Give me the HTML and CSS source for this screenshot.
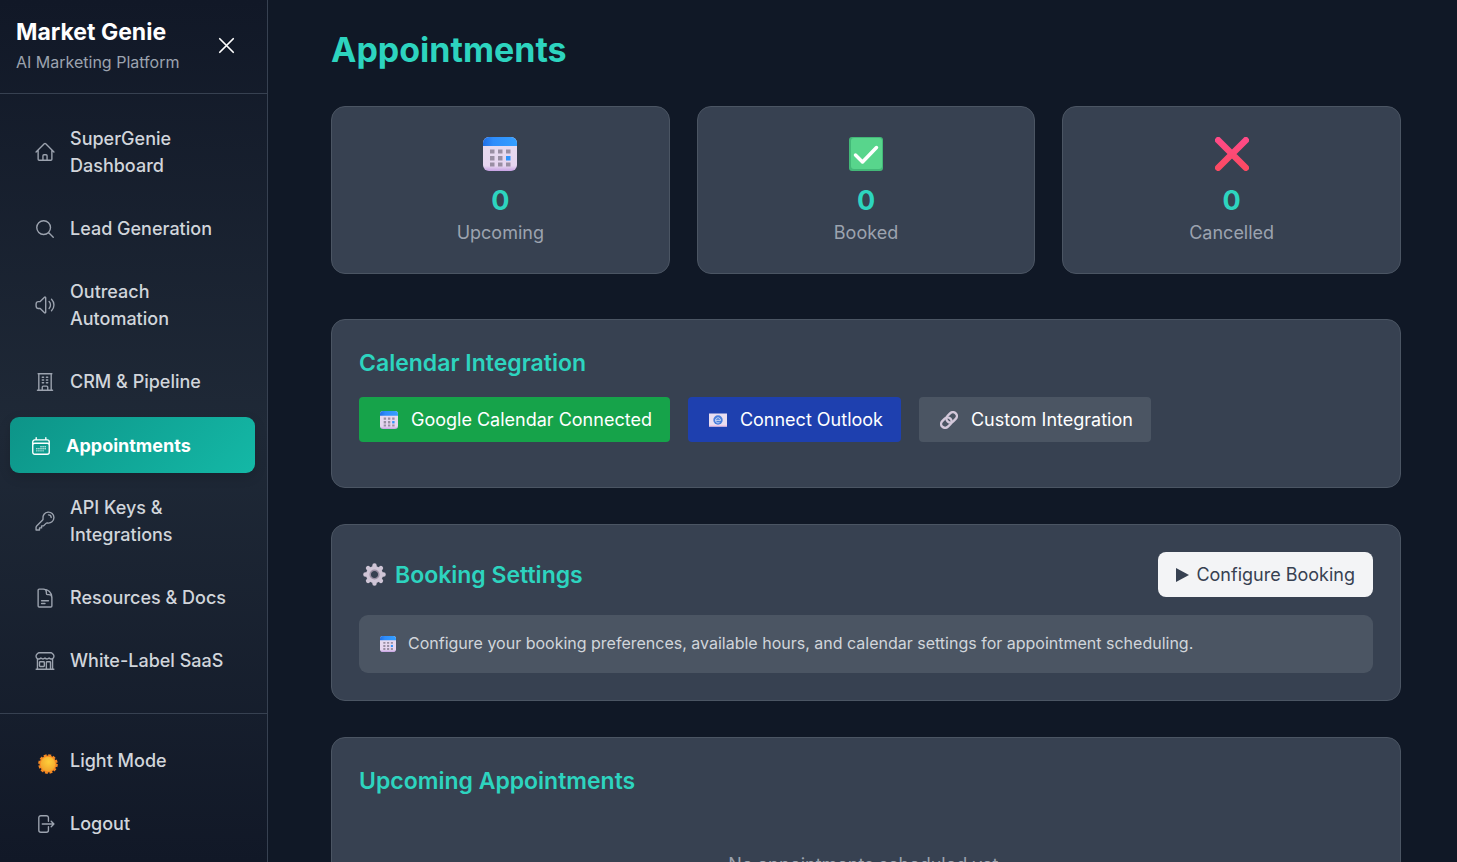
FILE: index.html
```html
<!DOCTYPE html>
<html lang="en">
<head>
	<title>Market Genie - Appointments</title>
	<meta charset="UTF-8">
	<meta name="viewport" content="width=device-width, initial-scale=1">
	<link rel="stylesheet" href="styles.css">
</head>
<body>

	<!-- Shared symbols -->
	<svg class="symbols" aria-hidden="true">
		<defs>
			<linearGradient id="calTop" x1="0" y1="0" x2="1" y2="0">
				<stop offset="0" stop-color="#1f6fe5"/>
				<stop offset=".3" stop-color="#2f8dfb"/>
				<stop offset="1" stop-color="#349fff"/>
			</linearGradient>
			<linearGradient id="calBody" x1="0" y1="0" x2="0" y2="1">
				<stop offset="0" stop-color="#e6dcee"/>
				<stop offset=".85" stop-color="#e6d5f0"/>
				<stop offset="1" stop-color="#c5a0e2"/>
			</linearGradient>
			<linearGradient id="crossFill" x1="0" y1="0" x2="0" y2="1">
				<stop offset="0" stop-color="#ff4a86"/>
				<stop offset="1" stop-color="#fb4a62"/>
			</linearGradient>
			<radialGradient id="sunFill" cx=".55" cy=".35" r=".65">
				<stop offset="0" stop-color="#ffcf3a"/>
				<stop offset="1" stop-color="#f2a52c"/>
			</radialGradient>
		</defs>
		<symbol id="calendar" viewBox="0 0 34 34">
			<rect width="34" height="34" rx="6" fill="url(#calBody)"/>
			<path d="M0 9V6a6 6 0 0 1 6-6h22a6 6 0 0 1 6 6v3Z" fill="url(#calTop)"/>
			<path d="M7 12.500h4.500v4H7Zm8 0h4.500v4H15Zm8 0h4.500v4H23ZM7 19h4.500v4.500H7Zm8 0h4.500v4.500H15ZM7 25.500h4.500v4H7Zm8 0h4.500v4H15Zm8 0h4.500v4H23Z" fill="#998ea3"/>
			<path d="M23 19h4.500v4.500H23Z" fill="#2f93fb"/>
		</symbol>
		<symbol id="check" viewBox="0 0 34 34">
			<rect width="34" height="34" rx="3" fill="#43b878"/>
			<rect x="2" y="1" width="31" height="31" rx="3" fill="#58d58c"/>
			<path d="m6.500 18 7 7L27.500 10.500" fill="none" stroke="#fff" stroke-width="3.500" stroke-linecap="round" stroke-linejoin="round"/>
		</symbol>
		<symbol id="cross" viewBox="0 0 34 34">
			<path d="M3.200 3.200 30.800 30.800M30.800 3.200 3.200 30.810" fill="none" stroke="url(#crossFill)" stroke-width="6.400" stroke-linecap="round"/>
		</symbol>
		<symbol id="mail" viewBox="0 0 18 18">
			<path d="M0 2.500h18v13H0Z" fill="#e9def0"/>
			<path d="M0 14h18v1.500H0Z" fill="#f0c9e6"/>
			<circle cx="9" cy="9" r="4.700" fill="#4a7fdc"/>
			<path d="M11.500 9.500a2.500 2.500 0 1 0-1 1.800M7 9.300h4.500" fill="none" stroke="#cfdcf6" stroke-width="1"/>
		</symbol>
		<symbol id="link" viewBox="0 0 18 18">
			<g fill="none" stroke="#d3c8da" stroke-width="2.400" transform="rotate(-45 9 9)">
				<rect x="-.5" y="5" width="11.500" height="8" rx="4"/>
				<rect x="7" y="5" width="11.500" height="8" rx="4"/>
			</g>
		</symbol>
		<symbol id="gear" viewBox="0 0 24 24">
			<path d="M12 4V2.500M12 20v1.500M4 12H2.500M20 12h1.500M6.300 6.300l-1-1M17.700 17.700l1 1M17.700 6.300l1-1M6.300 17.700l-1 1" stroke="#cfc5d6" stroke-width="4.600" stroke-linecap="round"/>
			<circle cx="12" cy="12" r="6.400" fill="none" stroke="#cfc5d6" stroke-width="5"/>
			<circle cx="12" cy="12" r="4.500" fill="none" stroke="#9a8fa3" stroke-width="1.600"/>
		</symbol>
		<symbol id="sun" viewBox="0 0 20 20">
			<circle cx="10" cy="10" r="8.500" fill="none" stroke="#f78a22" stroke-width="2.600" stroke-dasharray="2.850 1.600"/>
			<circle cx="10" cy="10" r="8.500" fill="#f78a22"/>
			<circle cx="10" cy="10" r="7.300" fill="url(#sunFill)"/>
		</symbol>
	</svg>

	<aside class="sidebar">
		<div class="brand">
			<div>
				<div class="brand-name">Market Genie</div>
				<div class="brand-tag">AI Marketing Platform</div>
			</div>
			<button class="close" type="button" aria-label="Close menu">
				<svg class="line-icon" viewBox="0 0 24 24"><path d="M6 18 18 6M6 6l12 12"/></svg>
			</button>
		</div>

		<nav class="menu">
			<a class="item" href="#dashboard">
				<svg class="line-icon" viewBox="0 0 24 24"><path d="m2.250 12 8.954-8.955c.44-.439 1.152-.439 1.591 0L21.750 12M4.500 9.750v10.125c0 .621.504 1.125 1.125 1.125H9.750v-4.875c0-.621.504-1.125 1.125-1.125h2.250c.621 0 1.125.504 1.125 1.125V21h4.125c.621 0 1.125-.504 1.125-1.125V9.750M8.250 21h8.250"/></svg>
				<span>SuperGenie Dashboard</span>
			</a>
			<a class="item" href="#leads">
				<svg class="line-icon" viewBox="0 0 24 24"><path d="m21 21-5.197-5.197m0 0A7.500 7.500 0 1 0 5.196 5.196a7.500 7.500 0 0 0 10.607 10.607Z"/></svg>
				<span>Lead Generation</span>
			</a>
			<a class="item" href="#outreach">
				<svg class="line-icon" viewBox="0 0 24 24"><path d="M19.114 5.636a9 9 0 0 1 0 12.728M16.463 8.288a5.250 5.250 0 0 1 0 7.424M6.750 8.250l4.720-4.720a.75.75 0 0 1 1.280.53v15.880a.75.75 0 0 1-1.280.53l-4.720-4.720H4.510c-.88 0-1.704-.507-1.938-1.354A9.009 9.009 0 0 1 2.250 12c0-.83.112-1.633.322-2.396C2.806 8.756 3.630 8.250 4.510 8.250H6.750Z"/></svg>
				<span>Outreach Automation</span>
			</a>
			<a class="item" href="#crm">
				<svg class="line-icon" viewBox="0 0 24 24"><path d="M3.750 21h16.500M4.500 3h15M5.250 3v18m13.500-18v18M9 6.750h1.500m-1.500 3h1.500m-1.500 3h1.500m3-6H15m-1.500 3H15m-1.500 3H15M9 21v-3.375c0-.621.504-1.125 1.125-1.125h3.750c.621 0 1.125.504 1.125 1.125V21"/></svg>
				<span>CRM &amp; Pipeline</span>
			</a>
			<a class="item active" href="#appointments" aria-current="page">
				<svg class="line-icon" viewBox="0 0 24 24"><path d="M6.750 3v2.250M17.250 3v2.250M3 18.750V7.500a2.250 2.250 0 0 1 2.250-2.250h13.500A2.250 2.250 0 0 1 21 7.500v11.250m-18 0A2.250 2.250 0 0 0 5.250 21h13.500A2.250 2.250 0 0 0 21 18.750m-18 0v-7.500A2.250 2.250 0 0 1 5.250 9h13.500A2.250 2.250 0 0 1 21 11.250v7.500m-9-6h.008v.008H12v-.008ZM12 15h.008v.008H12V15Zm0 2.250h.008v.008H12v-.008ZM9.750 15h.008v.008H9.750V15Zm0 2.250h.008v.008H9.750v-.008ZM7.500 15h.008v.008H7.500V15Zm0 2.250h.008v.008H7.500v-.008Zm6.750-4.500h.008v.008h-.008v-.008Zm0 2.250h.008v.008h-.008V15Zm0 2.250h.008v.008h-.008v-.008Zm2.250-4.500h.008v.008H16.500v-.008Zm0 2.250h.008v.008H16.500V15Z"/></svg>
				<span>Appointments</span>
			</a>
			<a class="item" href="#api">
				<svg class="line-icon" viewBox="0 0 24 24"><path d="M15.750 5.250a3 3 0 0 1 3 3m3 0a6 6 0 0 1-7.029 5.912c-.563-.097-1.159.026-1.563.43L10.500 17.250H8.250v2.250H6v2.250H2.250v-2.818c0-.597.237-1.170.659-1.591l6.499-6.499c.404-.404.527-1 .43-1.563A6 6 0 1 1 21.750 8.250Z"/></svg>
				<span>API Keys &amp; Integrations</span>
			</a>
			<a class="item" href="#docs">
				<svg class="line-icon" viewBox="0 0 24 24"><path d="M19.500 14.250v-2.625a3.375 3.375 0 0 0-3.375-3.375h-1.500A1.125 1.125 0 0 1 13.500 7.125v-1.500a3.375 3.375 0 0 0-3.375-3.375H8.250m0 12.750h7.500m-7.500 3H12M10.500 2.250H5.625c-.621 0-1.125.504-1.125 1.125v17.250c0 .621.504 1.125 1.125 1.125h12.750c.621 0 1.125-.504 1.125-1.125V11.250a9 9 0 0 0-9-9Z"/></svg>
				<span>Resources &amp; Docs</span>
			</a>
			<a class="item" href="#saas">
				<svg class="line-icon" viewBox="0 0 24 24"><path d="M13.500 21v-7.500a.75.75 0 0 1 .75-.75h3a.75.75 0 0 1 .75.75V21m-4.500 0H2.360m11.140 0H18m0 0h3.640m-1.390 0V9.349m-16.500 11.650V9.350m0 0a3.001 3.001 0 0 0 3.750-.615A2.993 2.993 0 0 0 9.750 9.750c.896 0 1.700-.393 2.250-1.016a2.993 2.993 0 0 0 2.250 1.016c.896 0 1.700-.393 2.250-1.016a3.001 3.001 0 0 0 3.750.614m-16.500 0a3.004 3.004 0 0 1-.621-4.720L4.318 3.440A1.500 1.500 0 0 1 5.378 3h13.243a1.500 1.500 0 0 1 1.060.44l1.190 1.189a3 3 0 0 1-.621 4.720m-13.500 8.650h3.750a.75.75 0 0 0 .75-.75V13.500a.75.75 0 0 0-.75-.75H6.750a.75.75 0 0 0-.75.75v3.750c0 .415.336.75.75.75Z"/></svg>
				<span>White-Label SaaS</span>
			</a>
		</nav>

		<div class="menu menu-bottom">
			<button class="item" type="button">
				<span class="sun-wrap"><svg class="sun"><use href="#sun"/></svg></span>
				<span>Light Mode</span>
			</button>
			<button class="item" type="button">
				<svg class="line-icon" viewBox="0 0 24 24"><path d="M15.750 9V5.250A2.250 2.250 0 0 0 13.500 3h-6a2.250 2.250 0 0 0-2.250 2.250v13.500A2.250 2.250 0 0 0 7.500 21h6a2.250 2.250 0 0 0 2.250-2.250V15m3 0 3-3m0 0-3-3m3 3H9"/></svg>
				<span>Logout</span>
			</button>
		</div>
	</aside>

	<main class="content">
		<h1>Appointments</h1>

		<div class="stats">
			<div class="card stat">
				<svg class="stat-icon"><use href="#calendar"/></svg>
				<div class="stat-number">0</div>
				<div class="stat-label">Upcoming</div>
			</div>
			<div class="card stat">
				<svg class="stat-icon"><use href="#check"/></svg>
				<div class="stat-number">0</div>
				<div class="stat-label">Booked</div>
			</div>
			<div class="card stat">
				<svg class="stat-icon"><use href="#cross"/></svg>
				<div class="stat-number">0</div>
				<div class="stat-label">Cancelled</div>
			</div>
		</div>

		<section class="card integrations">
			<h2>Calendar Integration</h2>
			<div class="buttons">
				<button class="btn btn-google" type="button"><svg class="btn-icon"><use href="#calendar"/></svg>Google Calendar Connected</button>
				<button class="btn btn-outlook" type="button"><svg class="btn-icon"><use href="#mail"/></svg>Connect Outlook</button>
				<button class="btn btn-custom" type="button"><svg class="btn-icon"><use href="#link"/></svg>Custom Integration</button>
			</div>
		</section>

		<section class="card">
			<div class="section-head">
				<h2 class="with-icon"><svg class="gear"><use href="#gear"/></svg>Booking Settings</h2>
				<button class="btn btn-light" type="button"><svg class="play" viewBox="0 0 13 14"><path d="M0 0v14l13-7Z"/></svg>Configure Booking</button>
			</div>
			<div class="note">
				<svg class="note-icon"><use href="#calendar"/></svg>
				<span>Configure your booking preferences, available hours, and calendar settings for appointment scheduling.</span>
			</div>
		</section>

		<section class="card">
			<h2>Upcoming Appointments</h2>
			<p class="empty">No appointments scheduled yet.</p>
		</section>
	</main>

</body>
</html>
```
FILE: styles.css
```css
* {
	box-sizing: border-box;
}
body {
	display: flex;
	height: 100vh;
	margin: 0;
	overflow: hidden;
	font-family: Inter, "Liberation Sans", sans-serif;
	font-size: 18px;
	line-height: 27px;
	color: #d1d5db;
	background: #101826;
}
button {
	font: inherit;
	border: 0;
	cursor: pointer;
}
svg {
	display: block;
	flex-shrink: 0;
}
h1, h2, p {
	margin: 0;
}
.symbols {
	position: absolute;
	width: 0;
	height: 0;
}
.line-icon {
	width: 22px;
	height: 22px;
	fill: none;
	stroke: currentColor;
	stroke-width: 1.5;
	stroke-linecap: round;
	stroke-linejoin: round;
}

/* Sidebar */
.sidebar {
	display: flex;
	flex-direction: column;
	flex-shrink: 0;
	width: 268px;
	border-right: 1px solid #374151;
	background: linear-gradient(#111827, #1f2937 50%, #111827);
	overflow: hidden;
}
.brand {
	display: flex;
	justify-content: space-between;
	align-items: center;
	padding: 16px 27px 17px 16px;
	border-bottom: 1px solid #374151;
}
.brand-name {
	font-size: 23px;
	font-weight: 700;
	line-height: 32px;
	color: #fff;
}
.brand-tag {
	font-size: 16px;
	line-height: 28px;
	color: #9ca3af;
}
.close {
	padding: 0 0 2px;
	color: #fff;
	background: none;
}
.close .line-icon {
	width: 27px;
	height: 27px;
}
.menu {
	display: flex;
	flex-direction: column;
	gap: 9px;
	padding: 18px 12px 25px;
}
.item {
	display: flex;
	align-items: center;
	gap: 14px;
	padding: 13px 22px 14px;
	border-radius: 9px;
	font-weight: 500;
	text-align: left;
	text-decoration: none;
	color: #d1d5db;
	background: none;
}
.item .line-icon {
	color: #9ca3af;
}
.item.active {
	margin: -1px 0 -1px -2px;
	padding: 15px 20px 14px;
	font-weight: 700;
	color: #fff;
	background: linear-gradient(135deg, #0d9488, #14b8a6);
	box-shadow: 0 4px 12px rgba(0, 0, 0, .15);
}
.item.active .line-icon {
	color: #fff;
}
.menu-bottom {
	padding-top: 19px;
	border-top: 1px solid #374151;
}
.sun-wrap {
	width: 22px;
	padding: 8px 0 0 4px;
}
.sun {
	width: 20px;
	height: 20px;
}

/* Content */
.content {
	flex: 1;
	min-width: 0;
	padding: 27px 56px 27px 63px;
	overflow: auto;
	scrollbar-width: none;
}
h1 {
	margin-bottom: 34px;
	font-size: 34px;
	font-weight: 700;
	line-height: 45px;
	color: #2dd4bf;
}
h2 {
	margin-bottom: 18px;
	font-size: 23px;
	font-weight: 600;
	line-height: 32px;
	color: #2dd4bf;
}
.card {
	margin-bottom: 36px;
	padding: 27px;
	border: 1px solid #4b5563;
	border-radius: 14px;
	background: #374151;
}
.stats {
	display: grid;
	grid-template-columns: repeat(3, 1fr);
	gap: 27px;
	margin-bottom: 45px;
}
.stat {
	display: flex;
	flex-direction: column;
	align-items: center;
	margin: 0;
}
.stat-icon {
	width: 34px;
	height: 34px;
	margin: 3px 0 12px;
}
.stat-number {
	font-size: 27px;
	font-weight: 700;
	line-height: 36px;
	color: #2dd4bf;
}
.stat-label {
	line-height: 27px;
	color: #9ca3af;
}
.integrations {
	padding-bottom: 45px;
}
.buttons {
	display: flex;
	flex-wrap: wrap;
	gap: 18px;
}
.btn {
	display: flex;
	align-items: center;
	padding: 9px 18px;
	border-radius: 4px;
	color: #fff;
}
.btn-icon {
	width: 18px;
	height: 18px;
	margin: 0 13px 0 3px;
}
.btn-google {
	background: #16a34a;
}
.btn-outlook {
	background: #1e40af;
}
.btn-custom {
	background: #4b5563;
}
.btn-light {
	gap: 7px;
	border-radius: 8px;
	color: #374151;
	background: #f3f4f6;
}
.play {
	width: 13px;
	height: 14px;
	fill: currentColor;
}
.section-head {
	display: flex;
	justify-content: space-between;
	align-items: center;
	margin-bottom: 18px;
}
.with-icon {
	display: flex;
	align-items: center;
	gap: 9px;
	margin: 0;
	padding-left: 4px;
}
.gear {
	width: 23px;
	height: 23px;
}
.note {
	display: flex;
	align-items: center;
	gap: 12px;
	padding: 15px 21px 16px;
	border-radius: 9px;
	font-size: 16px;
	background: #4b5563;
}
.note-icon {
	width: 16px;
	height: 16px;
}
.empty {
	padding: 36px 0;
	text-align: center;
	color: #9ca3af;
}
```
